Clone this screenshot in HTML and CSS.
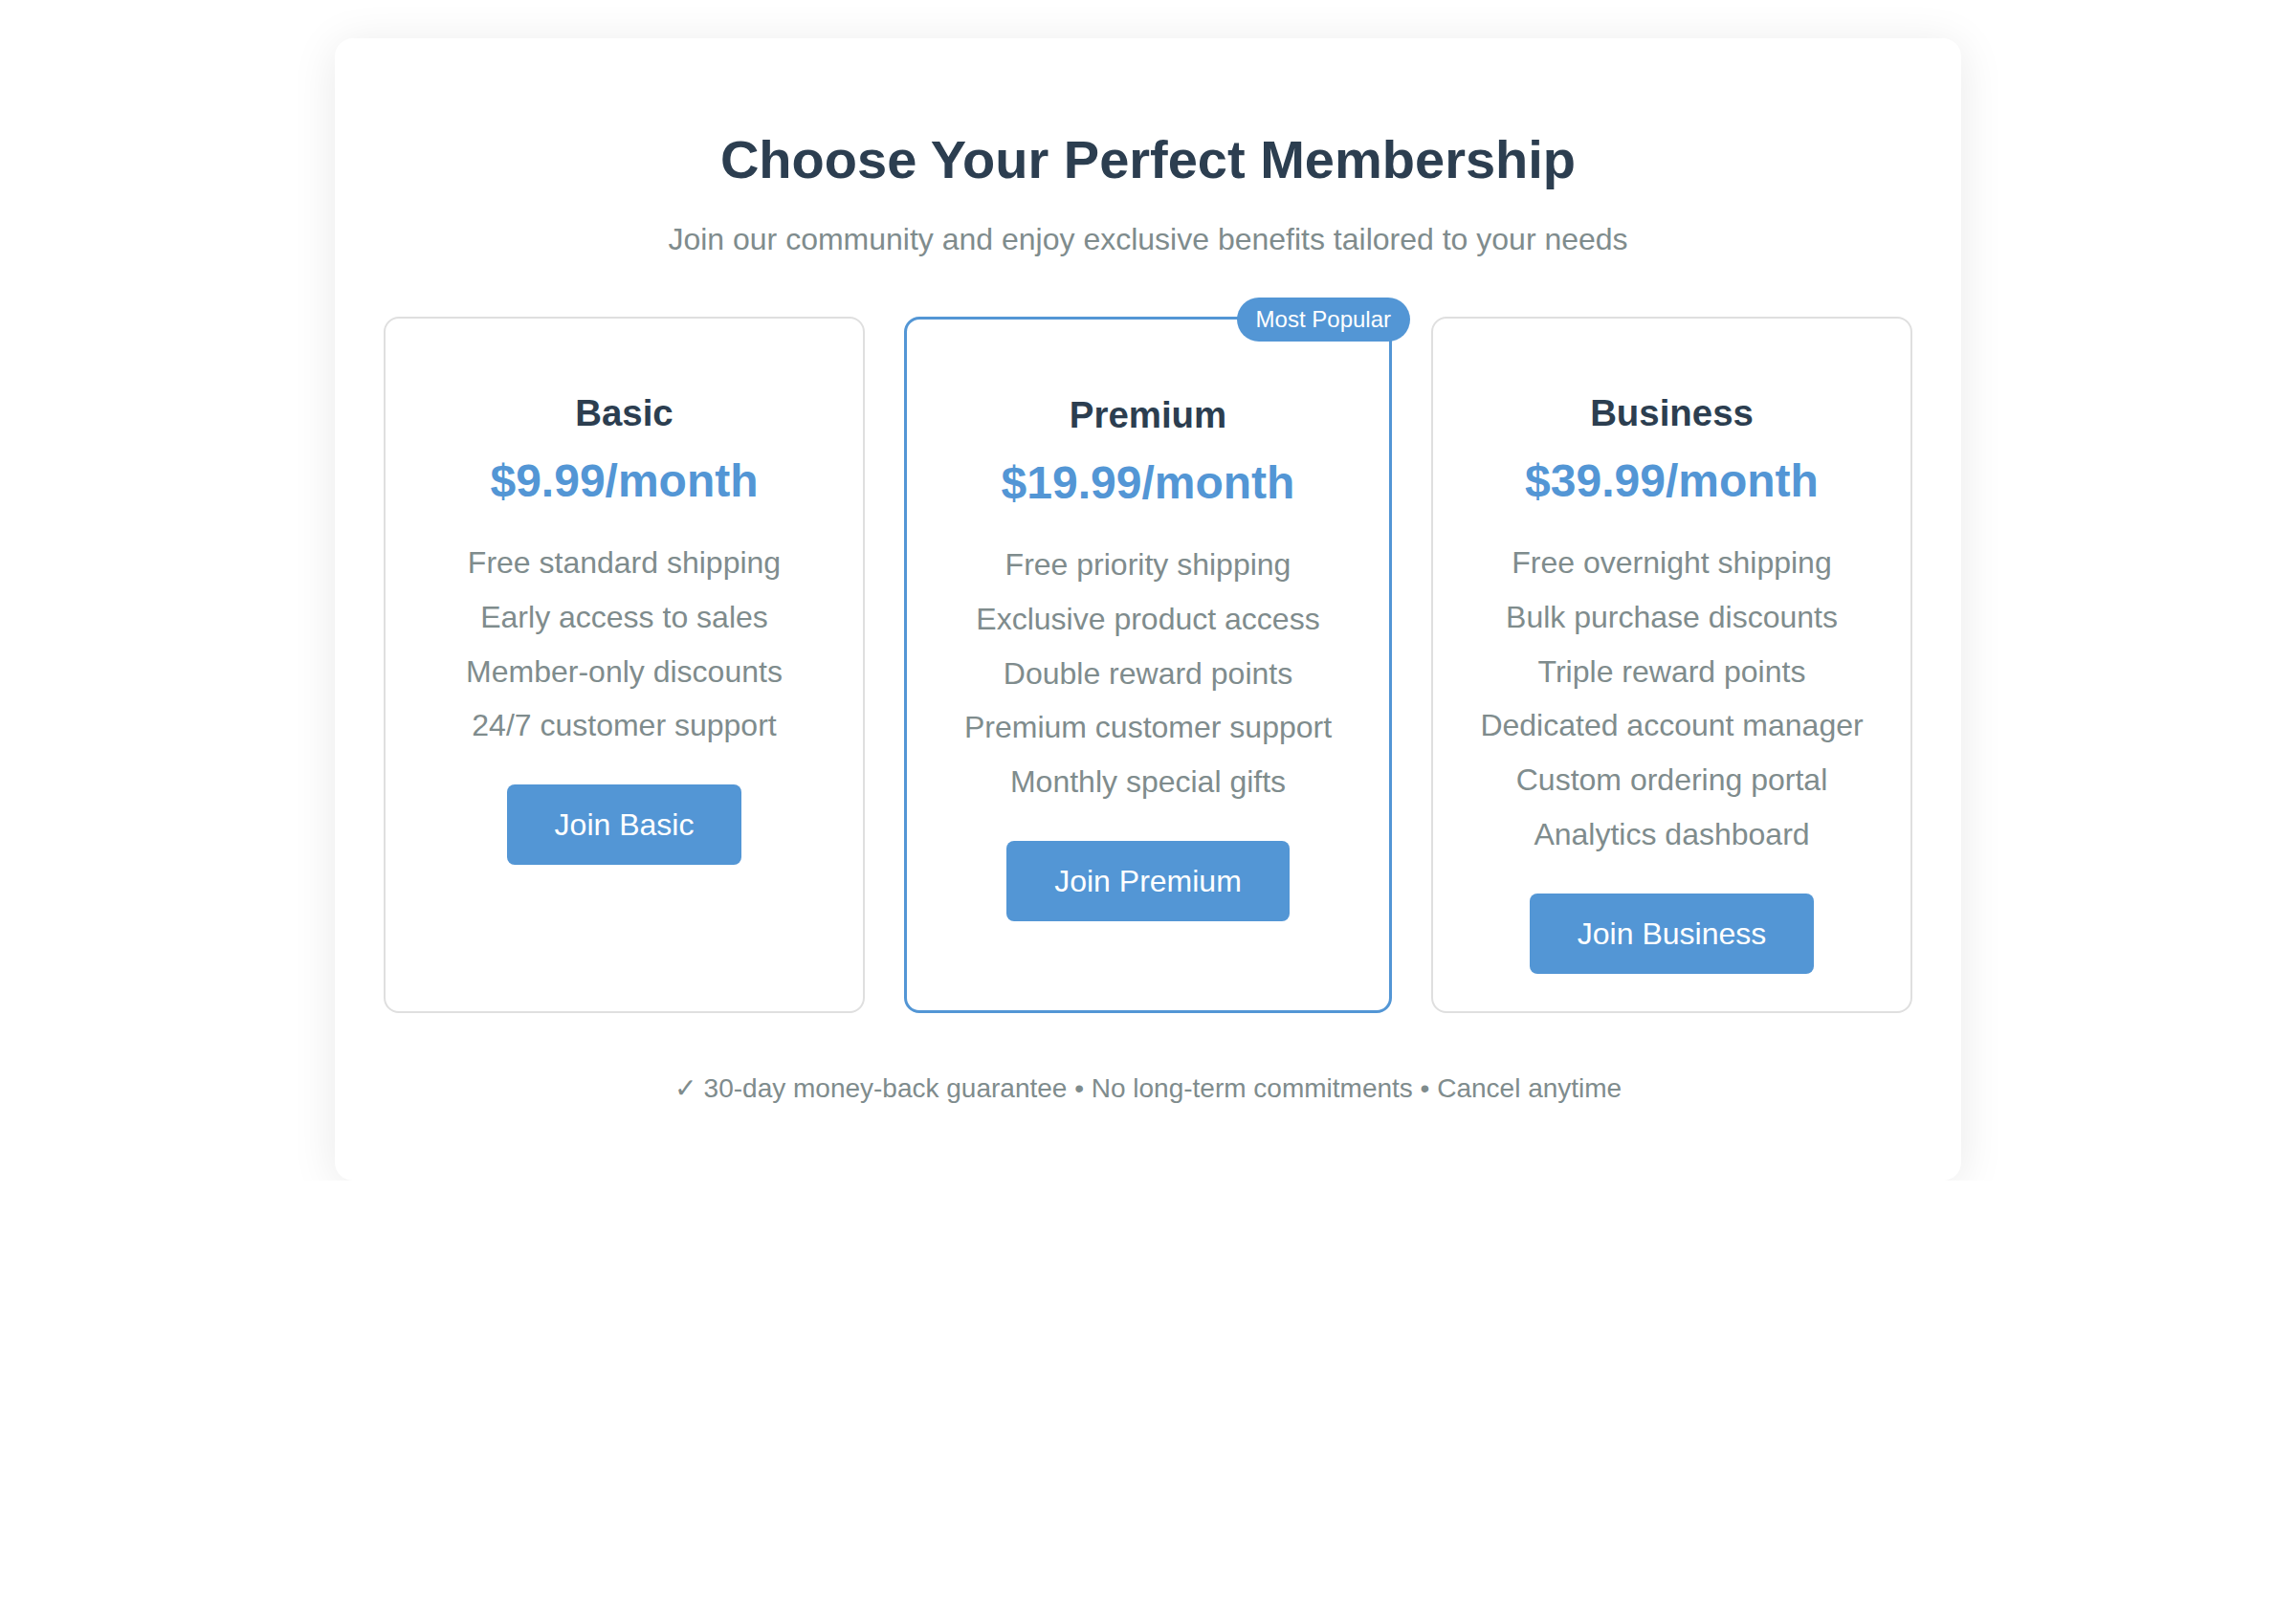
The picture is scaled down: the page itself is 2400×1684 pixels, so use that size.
FILE: index.html
```html
<!DOCTYPE html>
<html lang="en">
<head>
<meta charset="utf-8">
<title>Choose Your Perfect Membership</title>
<link rel="stylesheet" href="styles.css">
</head>
<body>
<main class="container">
  <h1 class="title">Choose Your Perfect Membership</h1>
  <p class="subtitle">Join our community and enjoy exclusive benefits tailored to your needs</p>
  <div class="plans">
    <section class="plan">
      <h3 class="plan-name">Basic</h3>
      <div class="price">$9.99/month</div>
      <ul class="features">
        <li>Free standard shipping</li>
        <li>Early access to sales</li>
        <li>Member-only discounts</li>
        <li>24/7 customer support</li>
      </ul>
      <button class="join">Join Basic</button>
    </section>
    <section class="plan featured">
      <span class="badge">Most Popular</span>
      <h3 class="plan-name">Premium</h3>
      <div class="price">$19.99/month</div>
      <ul class="features">
        <li>Free priority shipping</li>
        <li>Exclusive product access</li>
        <li>Double reward points</li>
        <li>Premium customer support</li>
        <li>Monthly special gifts</li>
      </ul>
      <button class="join">Join Premium</button>
    </section>
    <section class="plan">
      <h3 class="plan-name">Business</h3>
      <div class="price">$39.99/month</div>
      <ul class="features">
        <li>Free overnight shipping</li>
        <li>Bulk purchase discounts</li>
        <li>Triple reward points</li>
        <li>Dedicated account manager</li>
        <li>Custom ordering portal</li>
        <li>Analytics dashboard</li>
      </ul>
      <button class="join">Join Business</button>
    </section>
  </div>
  <p class="guarantee">✓ 30-day money-back guarantee • No long-term commitments • Cancel anytime</p>
</main>
</body>
</html>
```
FILE: styles.css
```css
* {
  box-sizing: border-box;
}

html, body {
  margin: 0;
  background: #ffffff;
}

body {
  padding-top: 40px;
  font-family: "Liberation Sans", Arial, Helvetica, sans-serif;
}

.container {
  width: 1700px;
  margin: 0 auto;
  padding: 94px 51px 80px;
  background: #ffffff;
  border-radius: 19px;
  box-shadow: 0 6px 48px rgba(0, 0, 0, 0.09);
  text-align: center;
}

.title {
  margin: 0;
  font-size: 56px;
  font-weight: bold;
  color: #2c3e50;
  line-height: normal;
}

.subtitle {
  margin: 33px 0 0;
  font-size: 32px;
  color: #7f8c8d;
  line-height: normal;
}

.plans {
  display: grid;
  grid-template-columns: 503fr 510fr 503fr;
  gap: 41px;
  margin-top: 62px;
}

.plan {
  position: relative;
  border: 2px solid #dfdfdf;
  border-radius: 16px;
  padding: 77px 24px 39px;
  background: #ffffff;
}

.plan.featured {
  border: 3px solid #5396d5;
  padding-top: 78px;
}

.badge {
  position: absolute;
  top: -23px;
  right: -22px;
  background: #5396d5;
  color: #ffffff;
  font-size: 24px;
  line-height: 28px;
  padding: 9px 20px;
  border-radius: 24px;
}

.plan-name {
  margin: 0;
  font-size: 38.4px;
  font-weight: bold;
  color: #2c3e50;
  line-height: normal;
}

.price {
  margin-top: 21px;
  font-size: 48px;
  font-weight: bold;
  color: #5396d5;
  line-height: normal;
}

.features {
  list-style: none;
  margin: 30px 0 0;
  padding: 0;
}

.features li {
  padding: 10px 0;
  font-size: 32px;
  line-height: 36.8px;
  color: #7f8c8d;
}

.join {
  margin-top: 33px;
  padding: 24px 50px;
  border: none;
  border-radius: 8px;
  background: #5396d5;
  color: #ffffff;
  font-family: "Liberation Sans", Arial, Helvetica, sans-serif;
  font-size: 32px;
  line-height: 36px;
  cursor: pointer;
}

.guarantee {
  margin: 62px 0 0;
  font-size: 28px;
  color: #7f8c8d;
  line-height: normal;
}
```
